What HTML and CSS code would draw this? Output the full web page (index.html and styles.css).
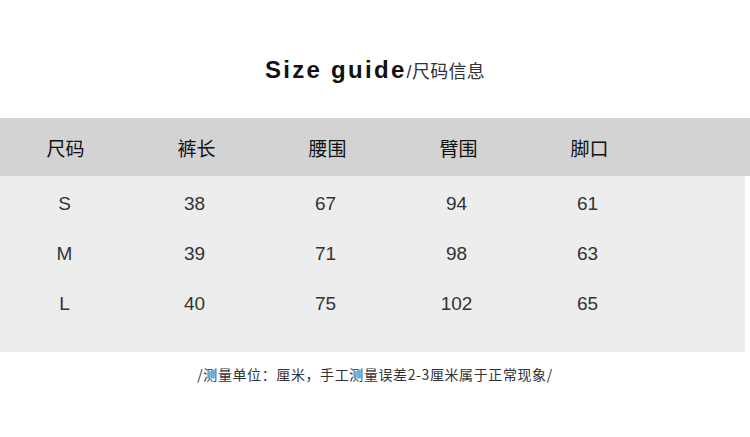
FILE: index.html
```html
<!DOCTYPE html>
<html lang="zh-CN">
<head>
<meta charset="utf-8">
<link rel="stylesheet" href="styles.css">
</head>
<body>
<div class="page">
  <h1 class="title"><span class="en">Size guide</span><span class="cn">/尺码信息</span></h1>
  <div class="table">
    <div class="row head">
      <div class="cell">尺码</div>
      <div class="cell">裤长</div>
      <div class="cell">腰围</div>
      <div class="cell">臂围</div>
      <div class="cell">脚口</div>
    </div>
    <div class="body">
      <div class="row">
        <div class="cell">S</div>
        <div class="cell">38</div>
        <div class="cell">67</div>
        <div class="cell">94</div>
        <div class="cell">61</div>
      </div>
      <div class="row">
        <div class="cell">M</div>
        <div class="cell">39</div>
        <div class="cell">71</div>
        <div class="cell">98</div>
        <div class="cell">63</div>
      </div>
      <div class="row">
        <div class="cell">L</div>
        <div class="cell">40</div>
        <div class="cell">75</div>
        <div class="cell">102</div>
        <div class="cell">65</div>
      </div>
    </div>
  </div>
  <p class="note">/测量单位：厘米，手工测量误差2-3厘米属于正常现象/</p>
</div>
</body>
</html>
```
FILE: styles.css
```css
html, body {
  margin: 0;
  padding: 0;
  background: #fff;
}
.page {
  width: 750px;
  height: 437px;
  font-family: "Liberation Sans", "Noto Sans CJK SC", sans-serif;
  color: #222;
  padding-top: 56px;
  box-sizing: border-box;
}
.title {
  margin: 0;
  height: 36px;
  display: flex;
  justify-content: center;
  align-items: baseline;
  font-weight: normal;
}
.title .en {
  font-size: 24px;
  font-weight: bold;
  letter-spacing: 2.3px;
  color: #111;
}
.title .cn {
  font-size: 18px;
  letter-spacing: 0.3px;
  color: #333;
}
.table {
  margin-top: 26px;
}
.row {
  display: grid;
  grid-template-columns: repeat(5, 131px);
}
.head {
  background: #d3d3d3;
  height: 58px;
  align-items: center;
  font-size: 19px;
  color: #111;
}
.body {
  background: #ededed;
  width: 745px;
  height: 176px;
  padding-top: 3px;
  box-sizing: border-box;
}
.body .row {
  grid-template-columns: 129px repeat(4, 131px);
  height: 50px;
  align-items: center;
  font-size: 19px;
  color: #333;
}
.cell {
  text-align: center;
}
.note {
  margin: 12px 0 0;
  text-align: center;
  font-family: "Noto Sans CJK SC", "Liberation Sans", sans-serif;
  font-size: 14px;
  letter-spacing: 0.6px;
  color: #333;
}
```
